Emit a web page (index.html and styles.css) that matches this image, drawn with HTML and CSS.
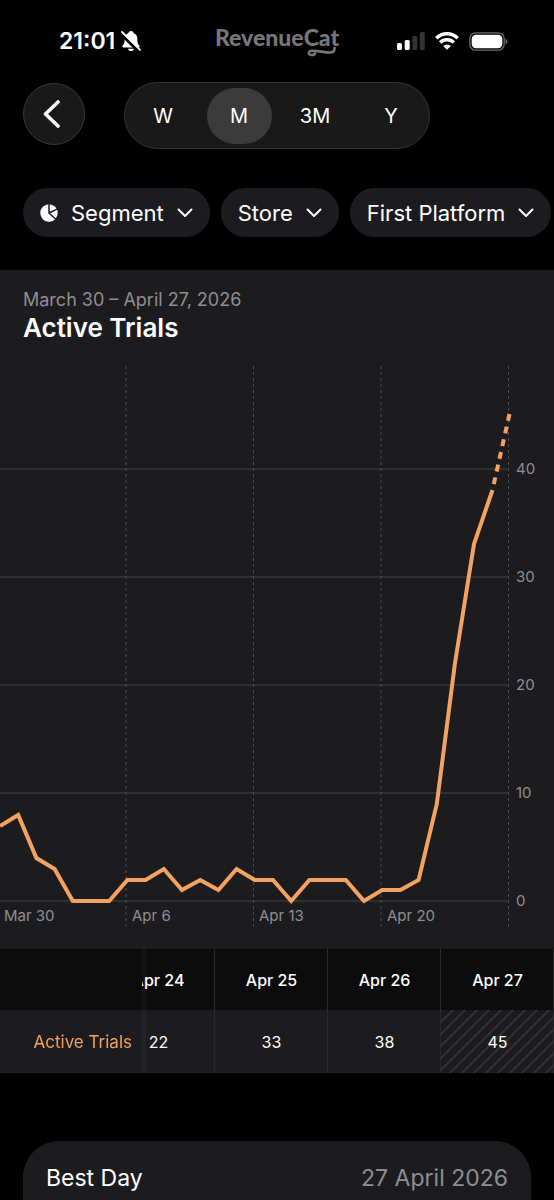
FILE: index.html
```html
<!DOCTYPE html>
<html lang="en">
<head>
<meta charset="utf-8">
<meta name="viewport" content="width=device-width, initial-scale=1">
<title>Active Trials</title>
<link rel="stylesheet" href="styles.css">
</head>
<body>
<div class="screen">
  <header class="status">
    <div class="status-left">
      <span class="clock">21:01</span>
      <svg class="bell" viewBox="0 0 20 22" width="20" height="22" aria-label="Silent">
        <path fill="#fff" d="M10 1c1.500 0 2.400.8 2.600 2 2.600.9 3.700 3 3.700 5.800 0 4.200.7 5.300 2 6.700.8.900.4 2-.9 2H2.600c-1.300 0-1.700-1.100-.9-2 1.300-1.400 2-2.500 2-6.700C3.700 6 4.800 3.900 7.400 3 7.600 1.800 8.500 1 10 1zM7 18.700h6c-.3 1.500-1.400 2.400-3 2.400s-2.700-.9-3-2.400z"/>
        <path d="M0 3.500 18 21" stroke="#000" stroke-width="4"/>
        <path d="M1 2 19 19.800" stroke="#fff" stroke-width="1.800" stroke-linecap="round"/>
      </svg>
    </div>
    <div class="brand">
      <span>RevenueCat</span>
      <svg class="swash" viewBox="0 0 32 10" width="32" height="10" aria-hidden="true">
        <path d="M27.500 0v1.500Q27.500 5.500 23 5.500C17 5.500 11 3.500 5 3.700 1 3.900.8 8 4.500 8 6.500 8 8 7.700 8 6.300" fill="none" stroke="#77777b" stroke-width="2.600" stroke-linecap="round"/>
      </svg>
    </div>
    <div class="status-right">
      <svg viewBox="0 0 28 18" width="28" height="18" aria-label="Signal">
        <rect x="0" y="11" width="5" height="7" rx="1.500" fill="#fff"/>
        <rect x="7.700" y="8" width="5" height="10" rx="1.500" fill="#fff"/>
        <rect x="15.300" y="4" width="5" height="14" rx="1.500" fill="#333335"/>
        <rect x="22.800" y="0" width="5" height="18" rx="1.500" fill="#333335"/>
      </svg>
      <svg viewBox="0 0 24 18" width="24" height="18" aria-label="Wi-Fi">
        <g fill="none" stroke="#fff" stroke-width="3.500">
          <path d="M1.300 6.200a15.200 15.200 0 0 1 21.400 0"/>
          <path d="M5.200 10.600a9.700 9.700 0 0 1 13.600 0"/>
        </g>
        <path fill="#fff" d="M8.200 14a5.500 5.500 0 0 1 7.600 0L12 17.800z"/>
      </svg>
      <svg viewBox="0 0 39 19" width="39" height="19" aria-label="Battery">
        <rect x=".8" y=".8" width="34.400" height="17.400" rx="6" fill="none" stroke="#6c6c70" stroke-width="1.300"/>
        <rect x="2.700" y="2.700" width="30.600" height="13.600" rx="4.200" fill="#fff"/>
        <path d="M36.600 6.500q1.800 1 1.800 3t-1.800 3z" fill="#6c6c70"/>
      </svg>
    </div>
  </header>

  <nav class="toolbar">
    <button class="back" type="button" aria-label="Back">
      <svg viewBox="0 0 18 28" width="18" height="28"><path d="M15 2 2.500 14 15 26" fill="none" stroke="#fff" stroke-width="3.600" stroke-linecap="round" stroke-linejoin="round"/></svg>
    </button>
    <div class="periods" role="radiogroup" aria-label="Period">
      <label class="period"><input type="radio" name="period"><span>W</span></label>
      <label class="period"><input type="radio" name="period" checked><span>M</span></label>
      <label class="period"><input type="radio" name="period"><span>3M</span></label>
      <label class="period"><input type="radio" name="period"><span>Y</span></label>
    </div>
  </nav>

  <div class="filters">
    <button class="chip" type="button" aria-haspopup="menu">
      <svg class="pie" viewBox="0 0 18 18" width="18" height="18" aria-hidden="true">
        <circle cx="9" cy="9" r="8.700" fill="#fff"/>
        <path d="M9 0v9l6.800 6.300M9 9l8.500-4.200" fill="none" stroke="#1c1c20" stroke-width="1.500"/>
      </svg>
      <span>Segment</span>
      <svg class="chevron" viewBox="0 0 16 10" width="16" height="10" aria-hidden="true"><path d="M1.500 1.500 8 8l6.500-6.500"/></svg>
    </button>
    <button class="chip" type="button" aria-haspopup="menu">
      <span>Store</span>
      <svg class="chevron" viewBox="0 0 16 10" width="16" height="10" aria-hidden="true"><path d="M1.500 1.500 8 8l6.500-6.500"/></svg>
    </button>
    <button class="chip" type="button" aria-haspopup="menu">
      <span>First Platform</span>
      <svg class="chevron" viewBox="0 0 16 10" width="16" height="10" aria-hidden="true"><path d="M1.500 1.500 8 8l6.500-6.500"/></svg>
    </button>
  </div>

  <section class="report">
    <p class="range">March 30 – April 27, 2026</p>
    <h1 class="title">Active Trials</h1>
    <svg class="chart" viewBox="0 0 554 562" role="img" aria-label="Active trials by day">
      <g class="rows">
        <path d="M0 103H509M0 211H509M0 319H509M0 427H509M0 535H509"/>
      </g>
      <g class="weeks">
        <path d="M126 0V561M253.500 0V561M381 0V561M508.500 0V561"/>
      </g>
      <polyline class="series" points="0,460 18.200,449 36.400,492 54.600,503 72.800,535 91,535 109.200,535 127.400,514 145.600,514 163.800,503 182,524 200.200,514 218.400,524 236.600,503 254.800,514 273,514 291.200,535 309.400,514 327.600,514 345.800,514 364,535 382.200,524 400.400,524 418.600,514 436.800,438 455,297 474,178 492.500,124"/>
      <path class="series forecast" d="M492.500 124 509.500 48"/>
      <g class="ticks">
        <text x="516" y="108">40</text>
        <text x="516" y="216">30</text>
        <text x="516" y="324">20</text>
        <text x="516" y="432">10</text>
        <text x="516" y="540">0</text>
        <text x="4" y="555">Mar 30</text>
        <text x="132" y="555">Apr 6</text>
        <text x="259" y="555">Apr 13</text>
        <text x="387" y="555">Apr 20</text>
      </g>
    </svg>
  </section>

  <div class="scroller">
    <table class="days">
      <colgroup><col class="col-name"><col><col><col><col></colgroup>
      <thead>
        <tr><td class="name"></td><th scope="col">Apr 24</th><th scope="col">Apr 25</th><th scope="col">Apr 26</th><th scope="col">Apr 27</th></tr>
      </thead>
      <tbody>
        <tr><th class="name" scope="row">Active Trials</th><td>22</td><td>33</td><td>38</td><td class="partial">45</td></tr>
      </tbody>
    </table>
  </div>

  <section class="stats">
    <dl class="stat"><dt>Best Day</dt><dd>27 April 2026</dd></dl>
  </section>
</div>
</body>
</html>
```

FILE: styles.css
```css
* { box-sizing: border-box; }

body {
  margin: 0;
  background: #000;
  color: #fff;
  font-family: Inter, "Liberation Sans", sans-serif;
}

button {
  font: inherit;
  color: inherit;
  border: 0;
  padding: 0;
}

.screen {
  min-height: 100vh;
  display: flex;
  flex-direction: column;
  overflow: hidden;
}

.status {
  display: grid;
  grid-template-columns: 1fr auto 1fr;
  align-items: center;
  height: 82px;
  padding: 0 46px;
}

.status-left { display: flex; align-items: center; gap: 6px; padding-left: 13px; }
.clock { font-size: 23px; font-weight: 600; line-height: 28px; }
.status-right { display: flex; align-items: center; justify-content: flex-end; gap: 10px; }

.brand {
  position: relative;
  font-family: Lato, "Noto Sans", sans-serif;
  font-size: 23px;
  font-weight: 900;
  line-height: 26px;
  color: #77777b;
  padding-bottom: 8px;
}

.swash { position: absolute; right: 0; bottom: 1px; }

.toolbar {
  display: grid;
  grid-template-columns: 1fr auto 1fr;
  align-items: start;
  padding: 0 23px;
}

.back {
  width: 62px;
  height: 62px;
  margin-top: 1px;
  border: 1px solid #38383a;
  border-radius: 50%;
  background: #19191a;
  display: grid;
  place-items: center;
}

.back svg { margin-right: 4px; }

.periods {
  display: flex;
  height: 67px;
  border: 1px solid #333335;
  border-radius: 34px;
  background: #19191a;
}

.period {
  width: 76px;
  display: grid;
  place-items: center;
  font-size: 20px;
}

.period input { position: absolute; opacity: 0; }
.period span {
  width: 65px;
  border-radius: 28px;
  line-height: 56px;
  text-align: center;
}
.period input:checked + span { background: #3b3b3c; }

.filters {
  display: flex;
  gap: 11px;
  padding: 39px 0 33px 23px;
}

.chip {
  flex: none;
  display: flex;
  align-items: center;
  gap: 13px;
  height: 49px;
  padding: 0 17px;
  border-radius: 25px;
  background: #1c1c20;
  font-size: 22px;
}

.chevron { fill: none; stroke: #fff; stroke-width: 2; stroke-linecap: round; stroke-linejoin: round; }

.report { background: #1c1c1e; padding: 19px 0 21px; }
.range { margin: 0 23px; font-size: 18px; line-height: 22px; color: #8e8e93; }
.title { margin: 0 23px 21px; font-size: 26px; font-weight: 600; line-height: 34px; }
.chart { display: block; width: 100%; }
.rows { stroke: #444447; stroke-width: 1; }
.weeks { stroke: #4c4c4f; stroke-width: 1; stroke-dasharray: 3 3; }
.series { fill: none; stroke: #f4a261; stroke-width: 4; }
.forecast { stroke-dasharray: 7 6; stroke-dashoffset: 7; }
.ticks { fill: #8e8e93; font-size: 15px; }

/* rtl keeps the newest days in view; the table itself reads left to right */
.scroller { direction: rtl; overflow-x: auto; scrollbar-width: none; }

.days {
  direction: ltr;
  table-layout: fixed;
  width: 594px;
  min-width: calc(100% + 40px);
  border-collapse: separate;
  border-spacing: 0;
  font-size: 16px;
  text-align: center;
}

.col-name { width: 142px; }
.days th, .days td { padding: 0 0 0 1px; border-right: 1px solid #29292b; font-weight: 400; }
.days thead tr { height: 61px; background: #0b0b0b; }
.days tbody tr { height: 63px; background: #1c1c1e; }
.days thead th { font-weight: 500; }

.days .name {
  position: sticky;
  left: 0;
  padding-right: 10px;
  border-right: 0;
  text-align: right;
  background: #1c1c1e;
  color: #f4a261;
  font-size: 17px;
  box-shadow: 4px 0 0 rgba(255, 255, 255, 0.03);
}
.days thead .name { background: #0b0b0b; }
.days .partial {
  background: linear-gradient(135deg, #303033 0 5%, #1c1c1e 5% 45%, #303033 45% 55%, #1c1c1e 55% 95%, #303033 95%) 0 0 / 12px 12px;
}

.stats {
  flex: 1;
  margin: 68px 23px 0;
  padding: 22px 23px 0;
  border-radius: 36px 36px 0 0;
  background: #1c1c1e;
}

.stat {
  display: flex;
  justify-content: space-between;
  margin: 0;
  font-size: 23px;
  line-height: 30px;
}
.stat dd { margin: 0; color: #8e8e93; }
```
